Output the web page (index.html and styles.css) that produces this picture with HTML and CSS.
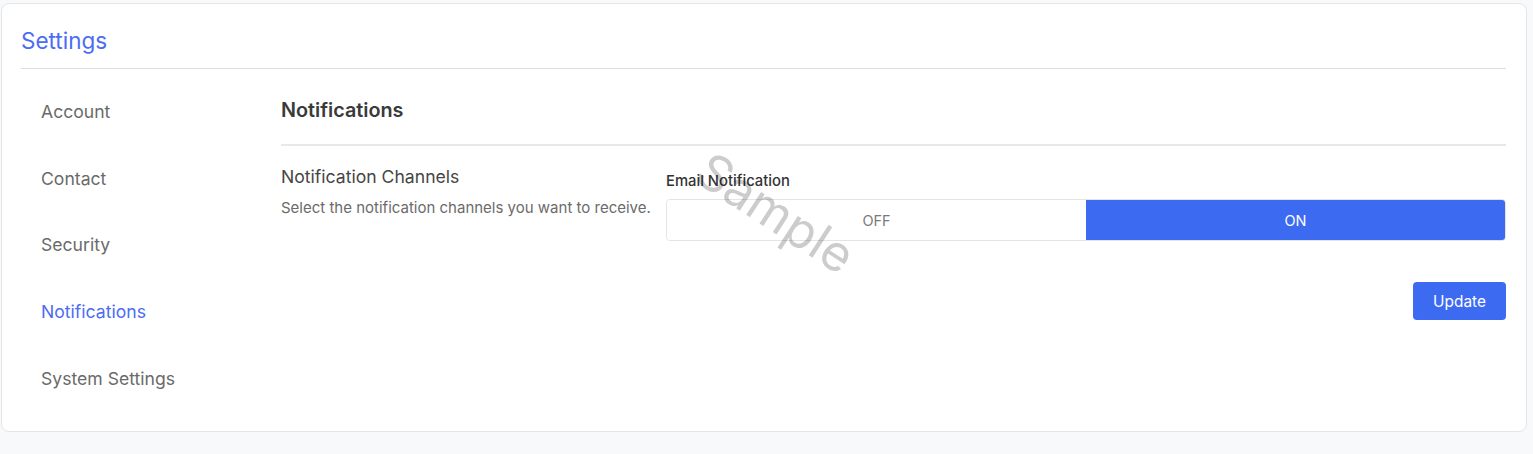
FILE: index.html
```html
<!DOCTYPE html>
<html>
<head>
<meta charset="utf-8">
<link rel="stylesheet" href="styles.css">
</head>
<body>
<div class="card">
  <div class="card-header">Settings</div>
  <div class="card-body">
    <nav class="sidebar">
      <a class="nav-item">Account</a>
      <a class="nav-item">Contact</a>
      <a class="nav-item">Security</a>
      <a class="nav-item active">Notifications</a>
      <a class="nav-item">System Settings</a>
    </nav>
    <main class="content">
      <h2 class="section-title">Notifications</h2>
      <div class="row">
        <div class="row-info">
          <div class="row-title">Notification Channels</div>
          <div class="row-desc">Select the notification channels you want to receive.</div>
        </div>
        <div class="row-field">
          <label class="field-label">Email Notification</label>
          <div class="toggle">
            <div class="toggle-opt">OFF</div>
            <div class="toggle-opt on">ON</div>
          </div>
          <div class="watermark">Sample</div>
        </div>
      </div>
      <div class="actions">
        <button class="btn-primary">Update</button>
      </div>
    </main>
  </div>
</div>
</body>
</html>
```
FILE: styles.css
```css
* { box-sizing: border-box; }
html, body { margin: 0; padding: 0; }
body {
  background: #f8f9fb;
  font-family: Inter, "Noto Sans", sans-serif;
  padding: 3px 6px 0 1px;
  height: 454px;
}
.card {
  background: #fff;
  border: 1px solid #e4e6ea;
  border-radius: 8px;
  height: 429px;
  padding: 0 20px 0 19px;
}
.card-header {
  color: #4b6cf5;
  font-size: 22.5px;
  line-height: 28px;
  padding-top: 23px;
  padding-bottom: 13px;
  border-bottom: 1px solid #dcdee2;
}
.card-body {
  display: flex;
}
.sidebar {
  width: 260px;
  flex: none;
  display: flex;
  flex-direction: column;
  padding-top: 31px;
}
.nav-item {
  padding-left: 20px;
  font-size: 17.6px;
  line-height: 24px;
  color: #6a6a6a;
  height: 66.7px;
}
.nav-item.active { color: #4b6cf5; }
.content {
  flex: 1;
}
.section-title {
  margin: 0;
  font-size: 19.8px;
  font-weight: 600;
  color: #3a3a3a;
  line-height: 26px;
  padding-top: 28px;
  padding-bottom: 21px;
  border-bottom: 2px solid #e6e8eb;
}
.row {
  display: flex;
  padding-top: 20px;
}
.row-info {
  width: 385px;
  flex: none;
}
.row-title {
  font-size: 17.6px;
  color: #454545;
  line-height: 22px;
}
.row-desc {
  font-size: 15px;
  color: #6b6b6b;
  line-height: 20px;
  margin-top: 10px;
}
.row-field {
  flex: 1;
  position: relative;
  padding-top: 6px;
}
.field-label {
  display: block;
  font-size: 14.8px;
  font-weight: 500;
  color: #333;
  line-height: 18px;
  margin-bottom: 9px;
}
.toggle {
  display: flex;
  height: 42px;
  border: 1px solid #e2e4e8;
  border-radius: 4px;
  overflow: hidden;
}
.toggle-opt {
  flex: 1;
  display: flex;
  align-items: center;
  justify-content: center;
  font-size: 14.5px;
  color: #7a7a7a;
  background: #fff;
}
.toggle-opt.on {
  background: #3c6af0;
  color: #fff;
}
.watermark {
  position: absolute;
  left: 50px;
  top: -22px;
  font-size: 50px;
  color: rgba(0,0,0,0.2);
  transform: rotate(33deg);
  transform-origin: left top;
  pointer-events: none;
  line-height: 1;
}
.actions {
  display: flex;
  justify-content: flex-end;
  padding-top: 41px;
}
.btn-primary {
  background: #3c6af0;
  color: #fff;
  border: none;
  border-radius: 4px;
  width: 93px;
  height: 38px;
  font-family: inherit;
  font-size: 15.4px;
}
```
